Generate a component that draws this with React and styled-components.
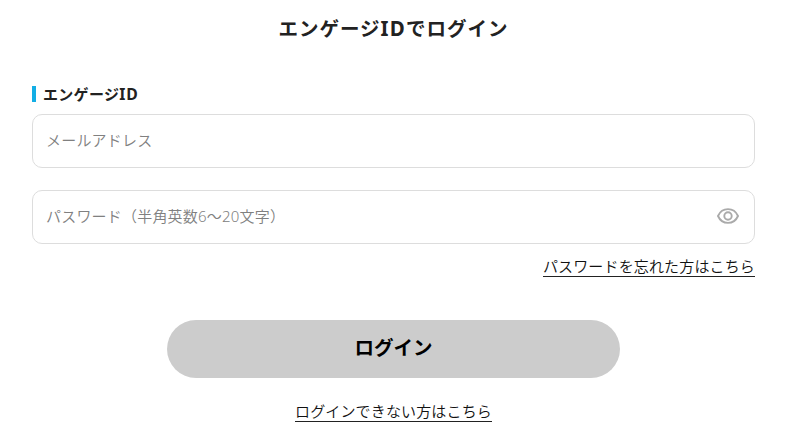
import React, { useState } from 'react';
import styled, { createGlobalStyle } from 'styled-components';

const GlobalStyle = createGlobalStyle`
    * {
        box-sizing: border-box;
    }

    body {
        margin: 0;
        background-color: #fff;
        color: #222;
        font-family: "Noto Sans", "Noto Sans CJK JP", sans-serif;
    }
`;

const Container = styled.main`
    display: flex;
    flex-direction: column;
    align-items: center;
    padding: 14px 30px 0 32px;
`;

const Titulo = styled.h1`
    margin: 0;
    font-size: 19.5px;
    line-height: 28px;
    letter-spacing: 1px;
    white-space: nowrap;
`;

const Sigla = styled.span`
    font-size: 1.05em;
    letter-spacing: 0.06em;
`;

const Form = styled.form`
    width: 100%;
    margin-top: 43px;
    display: flex;
    flex-direction: column;
`;

const Label = styled.label`
    height: 16px;
    margin-bottom: 12px;
    padding-left: 7px;
    border-left: 4px solid #13aee5;
    font-size: 15px;
    font-weight: bold;
    line-height: 17px;
    letter-spacing: 0.3px;
`;

const Campo = styled.div`
    display: flex;
    align-items: center;
    height: 54px;
    margin-bottom: 22px;
    padding: 0 14px 2px 13px;
    border: 1px solid #ddd;
    border-radius: 10px;
`;

const Input = styled.input`
    flex: 1;
    min-width: 0;
    padding: 0 0 1px;
    border: none;
    outline: 0;
    background: none;
    font-family: inherit;
    font-size: 15px;
    font-weight: 350;
    letter-spacing: 0.2px;

    &::placeholder {
        color: #808080;
        opacity: 1;
    }
`;

const BotaoOlho = styled.button`
    display: flex;
    padding: 0;
    border: none;
    background: none;
    cursor: pointer;
`;

const Link = styled.a`
    align-self: ${({ $align }) => $align || 'center'};
    border-bottom: 1px solid #222;
    color: #111;
    font-size: 15px;
    font-weight: 350;
    line-height: 20px;
    letter-spacing: 0.15px;
    text-decoration: none;
    white-space: nowrap;
`;

const LinkSenha = styled(Link)`
    margin-top: -10px;
`;

const Botao = styled.button`
    align-self: center;
    width: 453px;
    height: 58px;
    margin: 43px 0 23px;
    padding: 0 0 5px;
    border: none;
    border-radius: 29px;
    background-color: #ccc;
    color: #000;
    font-family: inherit;
    font-size: 19.5px;
    font-weight: bold;
`;

function IconeOlho() {
    return (
        <svg width="24" height="24" viewBox="0 0 24 24" fill="none" stroke="#aaa" strokeWidth="1.9">
            <path d="M2 12C4 7.500 7.500 5.100 12 5.100s8 2.400 10 6.900c-2 4.500-5.500 6.900-10 6.900S4 16.500 2 12z" />
            <circle cx="12" cy="12" r="3.700" />
        </svg>
    );
}

export default function App() {
    const [visivel, setVisivel] = useState(false);

    return (
        <>
            <GlobalStyle />
            <Container>
                <Titulo>エンゲージ<Sigla>ID</Sigla>でログイン</Titulo>
                <Form onSubmit={(e) => e.preventDefault()}>
                    <Label htmlFor="email">エンゲージ<Sigla>ID</Sigla></Label>
                    <Campo>
                        <Input id="email" type="email" placeholder="メールアドレス" />
                    </Campo>
                    <Campo>
                        <Input type={visivel ? 'text' : 'password'} placeholder="パスワード（半角英数6〜20文字）" />
                        <BotaoOlho type="button" onClick={() => setVisivel(!visivel)}>
                            <IconeOlho />
                        </BotaoOlho>
                    </Campo>
                    <LinkSenha href="#" $align="flex-end">パスワードを忘れた方はこちら</LinkSenha>
                    <Botao type="submit">ログイン</Botao>
                    <Link href="#">ログインできない方はこちら</Link>
                </Form>
            </Container>
        </>
    );
}
